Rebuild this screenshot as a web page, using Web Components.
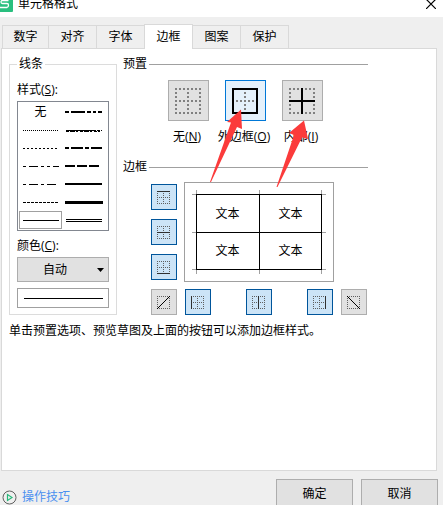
<!DOCTYPE html>
<html lang="zh-CN">
<head>
<meta charset="utf-8">
<title>单元格格式</title>
<style>
  body {
    margin: 0;
    font: 12px/16px "Open Sans", "Noto Sans CJK SC", sans-serif;
    color: #000;
    background: #efefef;
  }
</style>
</head>
<body>
<format-dialog></format-dialog>

<script>
/** Ventana: barra de título, pestañas, panel y pie. */
class FormatDialog extends HTMLElement {
  constructor() {
    super();
    this.attachShadow({ mode: "open" });
  }

  connectedCallback() {
    this.shadowRoot.innerHTML = `
      <style>
        :host {
          display: flex;
          flex-direction: column;
          height: 100vh;
          overflow: hidden;
          position: relative;
        }
        main {
          flex: 1;
          margin: -1px 6px 0 1px;
          padding: 7px;
          border: 1px solid #d9d9d9;
          background: #fff;
        }
        .columns {
          display: grid;
          grid-template-columns: 108px minmax(0, 245px);
          gap: 6px;
        }
        p { margin: 8px 0 0; }
        .arrows {
          position: absolute;
          left: 200px;
          top: 100px;
          pointer-events: none;
        }
      </style>
      <title-bar>单元格格式</title-bar>
      <tab-strip tabs="数字,对齐,字体,边框,图案,保护" active="3"></tab-strip>
      <main>
        <div class="columns">
          <group-box label="线条" boxed><line-options></line-options></group-box>
          <div>
            <group-box label="预置"><preset-list></preset-list></group-box>
            <group-box label="边框"><border-editor></border-editor></group-box>
          </div>
        </div>
        <p>单击预置选项、预览草图及上面的按钮可以添加边框样式。</p>
      </main>
      <dialog-footer></dialog-footer>
      <svg class="arrows" width="120" height="100" fill="#fb3b3b" aria-hidden="true">
        <path d="M41 9.5L27 22L31 22.5L10 82L11 82L37 27L42 29Z"/>
        <path d="M104 20.5L89 33L94 35L76.500 87L77.500 87L102 37.500L108 39Z"/>
      </svg>
    `;
  }
}

class TitleBar extends HTMLElement {
  constructor() {
    super();
    this.attachShadow({ mode: "open" });
    this.shadowRoot.innerHTML = `
      <style>
        :host {
          display: flex;
          align-items: flex-end;
          height: 17px;
          background: #fff;
          overflow: hidden;
        }
        .logo { margin: 0 5px 5px 0; }
        h1 {
          flex: 1;
          margin: 0 0 5px;
          font: inherit;
        }
        button {
          all: unset;
          display: flex;
          padding: 0 7px 8px;
        }
      </style>
      <svg class="logo" width="13" height="16" aria-hidden="true">
        <rect x="-3" width="16" height="16" rx="1" fill="#2abf7f"/>
        <path d="M8.500 4.500H2.500Q1 4.500 1 6T2.500 7.500H7Q8.500 7.500 8.500 9.200T7 11.500H0" fill="none" stroke="#fff" stroke-width="1.300"/>
      </svg>
      <h1><slot></slot></h1>
      <button type="button" aria-label="关闭">
        <svg width="10" height="10"><path d="M0 0L10 10M10 0L0 10" stroke="#000" stroke-width="1.200"/></svg>
      </button>
    `;
  }
}

class TabStrip extends HTMLElement {
  constructor() {
    super();
    this.attachShadow({ mode: "open" });
  }

  connectedCallback() {
    const active = Number(this.getAttribute("active"));
    const tabs = this.getAttribute("tabs").split(",");
    this.shadowRoot.innerHTML = `
      <style>
        :host {
          display: flex;
          align-items: flex-end;
          padding: 7px 0 0 2px;
          position: relative;
        }
        button {
          all: unset;
          box-sizing: border-box;
          width: 49px;
          height: 24px;
          margin-right: -1px;
          border: 1px solid #d9d9d9;
          text-align: center;
        }
        button:first-of-type { width: 47px; }
        button[aria-selected="true"] {
          height: 25px;
          padding-bottom: 1px;
          border-bottom: 0;
          background: #fff;
          z-index: 1;
        }
      </style>
      ${tabs
        .map((t, i) => `<button type="button" role="tab" aria-selected="${i === active}">${t}</button>`)
        .join("")}
    `;
    this.setAttribute("role", "tablist");
  }
}

/** Grupo con leyenda. Atributos: label, boxed (marco completo) */
class GroupBox extends HTMLElement {
  constructor() {
    super();
    this.attachShadow({ mode: "open" });
  }

  connectedCallback() {
    this.shadowRoot.innerHTML = `
      <style>
        :host { display: block; }
        fieldset {
          margin: 0;
          padding: 0;
          min-width: 0;
          border: 0;
          border-top: 1px solid #a0a0a0;
        }
        legend { padding: 0 2px 0 0; }
        :host([boxed]) fieldset { border: 1px solid #dcdcdc; }
        :host([boxed]) legend {
          margin-left: 7px;
          padding: 0 2px;
        }
      </style>
      <fieldset>
        <legend>${this.getAttribute("label")}</legend>
        <slot></slot>
      </fieldset>
    `;
  }
}

// trazos de la lista de estilos: [dash, grosor, x1, x2, y]
const LINE_STYLES = [
  null,
  [["4 2 14 2 4 2 3 2 4 9", 2, 0, 37, 8]],
  [["1 1", 1, 3, 39, 8.5]],
  [["30 1 3 1", 1, 1, 37, 8.5], ["3 1 5 1 2 2", 1, 1, 35, 9.5]],
  [["2 2", 1, 3, 38, 8.5]],
  [["4 2 12 2 4 2 11 9", 2, 0, 37, 8]],
  [["3 3 9 3 3 3 3 3 6 9", 1, 3, 39, 8.5]],
  [["10 2", 2, 0, 34, 8]],
  [["3 3 9 3", 1, 3, 36, 8.5]],
  [["", 2, 0, 37, 8]],
  [["3 1", 1, 3, 38, 8.5]],
  [["", 3, 0, 38, 8.5]],
  [["", 1, 3, 39, 8.5]],
  [["", 1, 1, 37, 7.5], ["", 1, 1, 37, 9.5]],
];

class LineOptions extends HTMLElement {
  constructor() {
    super();
    this.attachShadow({ mode: "open" });
  }

  connectedCallback() {
    this.shadowRoot.innerHTML = `
      <style>
        :host {
          display: flex;
          flex-direction: column;
          padding: 10px 7px 6px;
        }
        .list {
          display: grid;
          grid-template-columns: 1fr 1fr;
          column-gap: 2px;
          margin: 3px 0 7px;
          padding: 1px;
          grid-auto-rows: 18px;
          border: 1px solid #828790;
        }
        .list label {
          display: flex;
          border: 1px solid transparent;
        }
        .list label:has(:checked) { border-color: #a0a0a0; }
        .list input {
          appearance: none;
          width: 0;
          height: 0;
          margin: 0;
        }
        .none {
          flex: 1;
          text-align: center;
        }
        svg { display: block; }
        .combo {
          display: grid;
          margin: 3px 0 6px;
          align-items: center;
        }
        .combo > * { grid-area: 1 / 1; }
        .combo svg {
          justify-self: end;
          margin-right: 5px;
          pointer-events: none;
        }
        select {
          appearance: none;
          box-sizing: border-box;
          height: 25px;
          padding: 0 16px 0 0;
          border: 1px solid #adadad;
          border-radius: 0;
          background: #e1e1e1;
          color: inherit;
          font: inherit;
          text-align: center;
          text-align-last: center;
        }
        .sample {
          display: flex;
          align-items: center;
          height: 18px;
          padding: 0 5px 0 6px;
          border: 1px solid #a0a0a0;
        }
        .sample hr {
          flex: 1;
          margin: 0;
          border: 0;
          border-top: 1px solid #000;
        }
      </style>
      <span id="style-label">样式(<u>S</u>):</span>
      <div class="list" role="radiogroup" aria-labelledby="style-label">
        ${LINE_STYLES.map((s, i) => this.option(s, i)).join("")}
      </div>
      <label for="color">颜色(<u>C</u>):</label>
      <div class="combo">
        <select id="color"><option>自动</option></select>
        <svg width="7" height="4"><path d="M0 0H7L3.500 4Z"/></svg>
      </div>
      <div class="sample"><hr></div>
    `;
  }

  option(strokes, i) {
    const face = strokes
      ? `<svg width="41" height="16" stroke="#000" shape-rendering="crispEdges">${strokes
          .map(([dash, w, x1, x2, y]) =>
            `<path d="M${x1} ${y}H${x2}" stroke-width="${w}" stroke-dasharray="${dash || "none"}"/>`)
          .join("")}</svg>`
      : `<span class="none">无</span>`;
    return `<label><input type="radio" name="line" aria-label="线条 ${i}" ${i === 12 ? "checked" : ""}>${face}</label>`;
  }
}

class PresetList extends HTMLElement {
  constructor() {
    super();
    this.attachShadow({ mode: "open" });
  }

  connectedCallback() {
    this.shadowRoot.innerHTML = `
      <style>
        :host {
          display: grid;
          grid-template-columns: repeat(3, 57px);
          justify-content: center;
          padding: 8px 0 14px;
        }
        div {
          display: flex;
          flex-direction: column;
          align-items: center;
          gap: 8px;
          white-space: nowrap;
        }
        button {
          box-sizing: border-box;
          width: 41px;
          height: 41px;
          padding: 6px;
          border: 1px solid #adadad;
          background: #e1e1e1;
        }
        .hot {
          border-color: #0078d7;
          background: #e5f1fb;
        }
        svg { display: block; }
        label { padding-right: 3px; }
      </style>
      ${this.preset("none", "无(<u>N</u>)", "M1 0V26M25 0V26M0 1H26M0 25H26M13 0V26M0 13H26", "")}
      ${this.preset("outer", "外边框(<u>O</u>)", "M13 0V26M0 13H26", "M1 1H25V25H1Z", "hot")}
      ${this.preset("inner", "内部(<u>I</u>)", "M1 0V26M25 0V26M0 1H26M0 25H26", "M13 0V26M0 13H26")}
    `;
  }

  preset(id, label, dots, solid, cls = "") {
    return `
      <div>
        <button type="button" id="${id}" class="${cls}">
          <svg width="26" height="26" fill="none" stroke-width="2" shape-rendering="crispEdges">
            <path d="${dots}" stroke="#808080" stroke-dasharray="2 2"/>
            <path d="${solid}" stroke="#000"/>
          </svg>
        </button>
        <label for="${id}">${label}</label>
      </div>`;
  }
}

/** Botón de borde. Atributos: side, on (boolean) */
class EdgeButton extends HTMLElement {
  constructor() {
    super();
    this.attachShadow({ mode: "open" });
  }

  connectedCallback() {
    const solid = {
      top: "M0 .5H13",
      middle: "M0 6.5H13",
      bottom: "M0 12.5H13",
      left: "M.5 0V13",
      center: "M6.5 0V13",
      right: "M12.5 0V13",
      up: "M0 13L13 0",
      down: "M0 0L13 13",
    };
    const side = this.getAttribute("side");
    const diagonal = side === "up" || side === "down";
    const cross = diagonal ? "" : "M6.5 0V13M0 6.5H13";
    this.shadowRoot.innerHTML = `
      <style>
        :host { display: block; }
        button {
          display: block;
          box-sizing: border-box;
          width: 26px;
          height: 26px;
          padding: 5px;
          border: 1px solid #adadad;
          background: #e1e1e1;
        }
        :host([on]) button {
          border-color: #00559b;
          background: #cce4f7;
        }
        svg { display: block; }
      </style>
      <button type="button" aria-label="${side}" aria-pressed="${this.hasAttribute("on")}">
        <svg width="13" height="13" fill="none">
          <path d="M.5 0V13M12.500 0V13M0 .5H13M0 12.500H13${cross}" stroke="#606060" stroke-dasharray="1 1" shape-rendering="crispEdges"/>
          <path d="${solid[side]}" stroke="${diagonal ? "#000" : "#303030"}"/>
        </svg>
      </button>
    `;
  }
}

class BorderEditor extends HTMLElement {
  constructor() {
    super();
    this.attachShadow({ mode: "open" });
    this.shadowRoot.innerHTML = `
      <style>
        :host {
          display: grid;
          grid-template-columns: 26px 150px 26px;
          grid-template-rows: 100px 26px;
          gap: 7px;
          justify-content: center;
          padding: 7px 0 0 27px;
        }
        .side, .bottom {
          display: flex;
          justify-content: space-between;
        }
        .side {
          flex-direction: column;
          padding: 2px 0;
        }
        .bottom { padding: 0 1px; }
        .preview {
          display: grid;
          grid-column: 2 / 4;
          width: 148px;
          border: 1px solid #a0a0a0;
        }
        .preview > * { grid-area: 1 / 1; }
        .cells {
          display: grid;
          grid-template-columns: 1fr 1fr;
          grid-template-rows: 1fr 1fr;
          place-items: center;
          padding: 12px 11px 11px;
        }
      </style>
      <div class="side">
        <edge-button side="top" on></edge-button>
        <edge-button side="middle" on></edge-button>
        <edge-button side="bottom" on></edge-button>
      </div>
      <div class="preview">
        <svg width="148" height="98" fill="none" shape-rendering="crispEdges">
          <path stroke="#a0a0a0" d="M7 11.500H141M7 49.500H141M7 86.500H141M11.500 7V91M74.500 7V91M136.500 7V91"/>
          <path stroke="#000" d="M11.500 11.500H136.500V86.500H11.500ZM74.500 11V87M11 49.500H137"/>
        </svg>
        <div class="cells">
          <span>文本</span><span>文本</span>
          <span>文本</span><span>文本</span>
        </div>
      </div>
      <edge-button side="up"></edge-button>
      <div class="bottom">
        <edge-button side="left" on></edge-button>
        <edge-button side="center" on></edge-button>
        <edge-button side="right" on></edge-button>
      </div>
      <edge-button side="down"></edge-button>
    `;
  }
}

class DialogFooter extends HTMLElement {
  constructor() {
    super();
    this.attachShadow({ mode: "open" });
    this.shadowRoot.innerHTML = `
      <style>
        :host {
          display: flex;
          align-items: flex-start;
          gap: 8px;
          height: 26px;
          padding: 8px 5px 0 2px;
        }
        a {
          display: flex;
          align-items: center;
          gap: 5px;
          margin: 10px auto 0 0;
          color: #4a90f0;
          text-decoration: none;
        }
        button {
          box-sizing: border-box;
          width: 77px;
          height: 30px;
          padding: 0;
          border: 1px solid #adadad;
          background: #e1e1e1;
          color: inherit;
          font: inherit;
        }
      </style>
      <a href="#">
        <svg width="15" height="15" fill="none">
          <circle cx="7.500" cy="7.500" r="6.500" stroke="#606060"/>
          <path d="M5.500 4.500V10.500L10 7.500Z" stroke="#27b87a" stroke-width="1.200"/>
        </svg>
        操作技巧
      </a>
      <button type="button">确定</button>
      <button type="button">取消</button>
    `;
  }
}

customElements.define("title-bar", TitleBar);
customElements.define("tab-strip", TabStrip);
customElements.define("group-box", GroupBox);
customElements.define("line-options", LineOptions);
customElements.define("preset-list", PresetList);
customElements.define("edge-button", EdgeButton);
customElements.define("border-editor", BorderEditor);
customElements.define("dialog-footer", DialogFooter);
customElements.define("format-dialog", FormatDialog);
</script>
</body>
</html>
